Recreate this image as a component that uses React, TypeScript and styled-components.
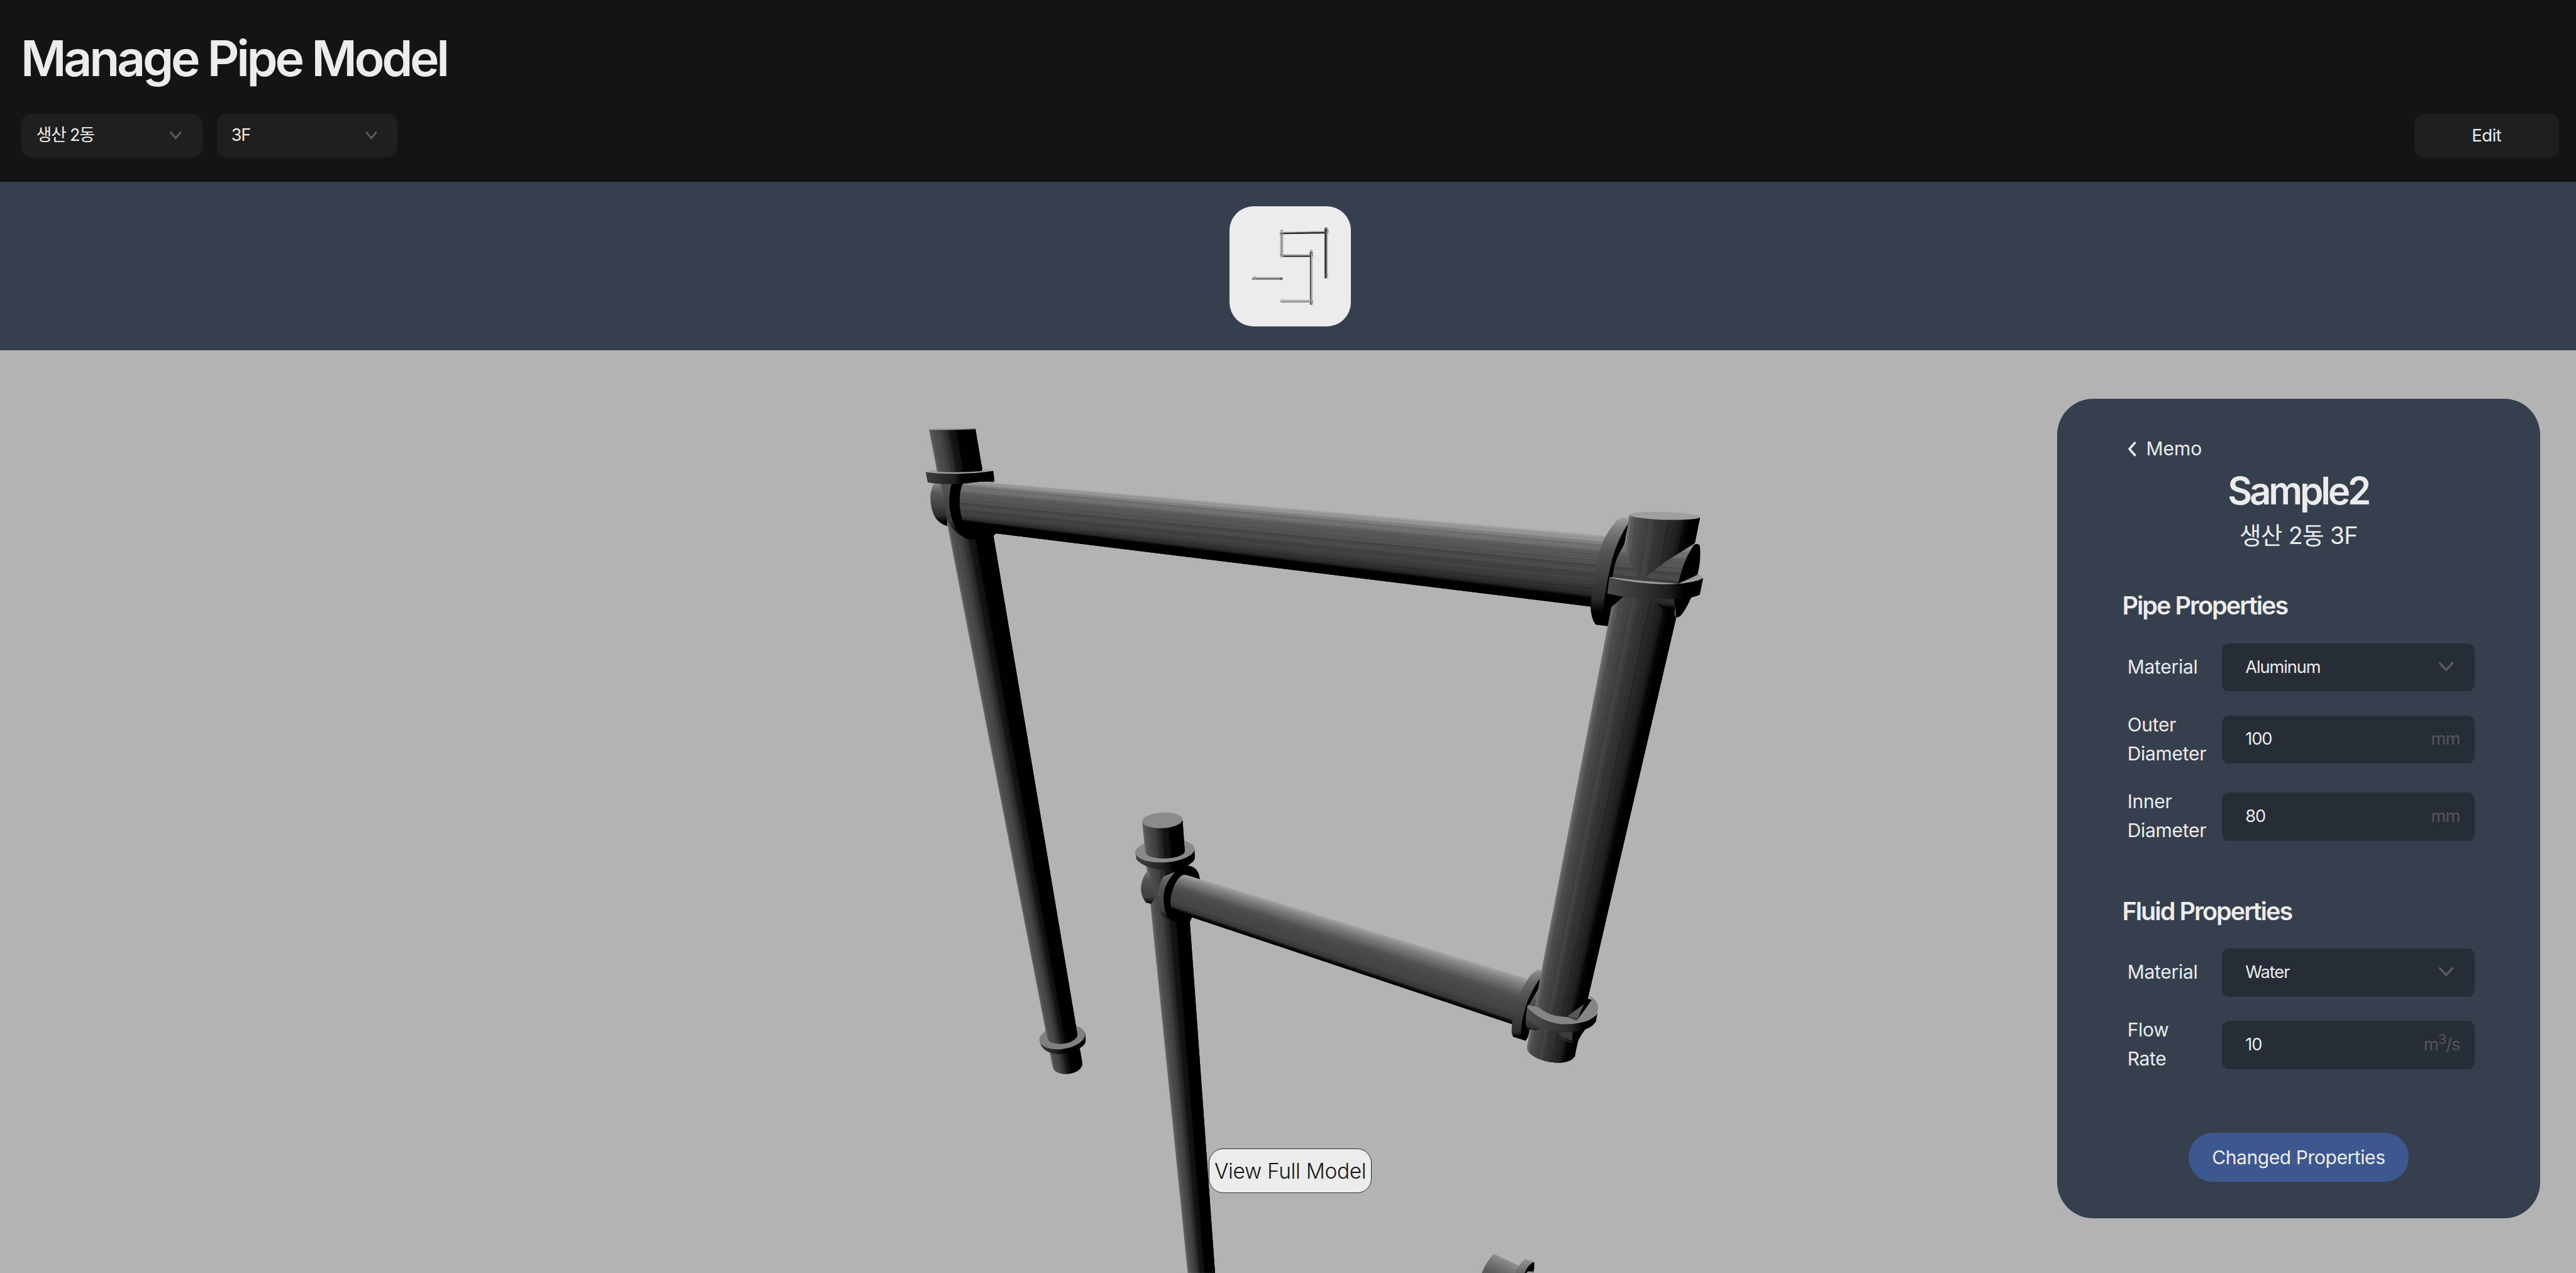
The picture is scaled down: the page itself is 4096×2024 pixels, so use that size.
import React from 'react';
import styled, { createGlobalStyle } from 'styled-components';

/* Design units are laid out on a 5702-unit wide artboard. */
const UNIT = 4096 / 5702;
const u = (n: number) => `${+(n * UNIT).toFixed(2)}px`;

const color = {
  page: '#141414',
  control: '#1f1f1f',
  slate: '#363f4d',
  field: '#272d36',
  stage: '#b3b3b3',
  light: '#ececec',
  muted: '#5c5c5c',
  accent: '#3d588f',
};

const GlobalStyle = createGlobalStyle`
  *, *::before, *::after { box-sizing: border-box; }
  body {
    margin: 0;
    overflow: hidden;
    background: ${color.page};
    color: ${color.light};
    font-family: Inter, "Noto Sans CJK KR", sans-serif;
  }
  h1, h2, h3, p { margin: 0; }
`;

const Page = styled.main`
  display: flex;
  flex-direction: column;
  width: 4096px;
  height: 2024px;
  overflow: hidden;
`;

/* ---------- header ---------- */

const Header = styled.header`
  display: flex;
  flex-direction: column;
  flex: none;
  height: ${u(402)};
  padding: ${u(50)} ${u(38)} 0 ${u(48)};
  background: ${color.page};
`;

const Title = styled.h1`
  height: ${u(160)};
  margin-left: ${u(-2)};
  font-size: ${u(109.5)};
  font-weight: 600;
  letter-spacing: -0.0541em;
  line-height: ${u(160)};
  white-space: nowrap;
`;

const Toolbar = styled.div`
  display: flex;
  justify-content: space-between;
  margin-top: ${u(42)};
`;

const Filters = styled.div`
  display: flex;
  gap: ${u(32)};
`;

const FilterSelect = styled.div`
  display: flex;
  align-items: center;
  justify-content: space-between;
  width: ${u(400)};
  height: ${u(96)};
  padding: 0 ${u(45.5)} 0 ${u(32)};
  border-radius: ${u(21)};
  background: ${color.control};
  font-size: ${u(37.6)};
  letter-spacing: -0.045em;
  line-height: ${u(48)};
  white-space: nowrap;
`;

const EditButton = styled.button`
  width: ${u(320)};
  height: ${u(96)};
  padding: 0 0 ${u(2)};
  border: 0;
  border-radius: ${u(21)};
  background: ${color.control};
  color: ${color.light};
  font: inherit;
  font-size: ${u(38.4)};
  letter-spacing: -0.02em;
`;

/* ---------- model strip ---------- */

const ModelStrip = styled.section`
  display: flex;
  flex: none;
  align-items: center;
  justify-content: center;
  height: ${u(374)};
  padding-left: ${u(10)};
  background: ${color.slate};
`;

const Thumbnail = styled.div`
  width: ${u(268)};
  height: ${u(266)};
  overflow: hidden;
  border-radius: ${u(53)};
  background: ${color.light};

  svg {
    display: block;
    width: 100%;
    height: 100%;
  }
`;

/* ---------- stage ---------- */

const Stage = styled.section`
  position: relative;
  flex: 1;
  overflow: hidden;
  background: ${color.stage};
`;

const Scene = styled.svg`
  display: block;
  width: 4096px;
  height: ${u(2042)};
`;

const ViewButton = styled.button`
  position: absolute;
  top: ${u(1766.5)};
  left: ${u(2676)};
  width: ${u(360)};
  height: ${u(98)};
  padding: ${u(2)} 0 0;
  border: ${u(2.7)} solid #2b2b2b;
  border-radius: ${u(32)};
  background: ${color.light};
  color: #141414;
  font: inherit;
  font-size: ${u(46.5)};
  font-weight: 300;
  letter-spacing: -0.009em;
  white-space: nowrap;
`;

/* ---------- properties panel ---------- */

const Panel = styled.aside`
  position: absolute;
  top: ${u(106)};
  left: ${u(4554)};
  display: flex;
  flex-direction: column;
  width: ${u(1068)};
  height: ${u(1814)};
  padding: ${u(80)} ${u(144)} 0 ${u(142)};
  border-radius: ${u(80)};
  background: ${color.slate};
`;

const BackLink = styled.div`
  display: flex;
  align-items: center;
  gap: ${u(22.5)};
  height: ${u(64)};
  padding-left: ${u(13)};
  font-size: ${u(41.7)};
  line-height: ${u(64)};
`;

const SampleName = styled.h2`
  height: ${u(120)};
  font-size: ${u(83.4)};
  font-weight: 600;
  letter-spacing: -0.0695em;
  line-height: ${u(120)};
  text-align: center;
`;

const Location = styled.p`
  height: ${u(78)};
  padding-left: ${u(2)};
  font-size: ${u(52.4)};
  letter-spacing: -0.018em;
  line-height: ${u(79.5)};
  text-align: center;
`;

const Section = styled.section<{ $top: number }>`
  margin-top: ${(p) => u(p.$top)};
`;

const SectionTitle = styled.h3`
  height: ${u(64)};
  margin-bottom: ${u(51)};
  padding-left: ${u(1.5)};
  font-size: ${u(55)};
  font-weight: 600;
  letter-spacing: -0.049em;
  line-height: ${u(66)};
`;

const Rows = styled.div`
  display: flex;
  flex-direction: column;
  gap: ${u(42.7)};
`;

const PropertyRow = styled.label`
  display: flex;
  align-items: center;
  justify-content: space-between;
`;

const Caption = styled.span`
  width: ${u(184)};
  margin-left: ${u(13)};
  font-size: ${u(41.7)};
  letter-spacing: -0.008em;
  line-height: ${u(64)};
`;

const Field = styled.span<{ $select?: boolean }>`
  display: flex;
  align-items: center;
  justify-content: space-between;
  width: ${u(560.4)};
  height: ${u(106.6)};
  padding: 0 ${(p) => u(p.$select ? 48 : 33)} ${u(2.5)} ${u(52.5)};
  border-radius: ${u(16)};
  background: ${color.field};
  font-size: ${u(37.8)};
  letter-spacing: -0.038em;
`;

const Unit = styled.span`
  color: #53565a;
  font-size: ${u(38)};

  sup {
    font-size: 0.8em;
    line-height: 0;
  }
`;

const SubmitButton = styled.button`
  align-self: center;
  width: ${u(487.5)};
  height: ${u(108.4)};
  margin: ${u(131)} 0 0 ${u(2)};
  padding: 0 0 ${u(1)};
  border: 0;
  border-radius: ${u(54)};
  background: ${color.accent};
  color: ${color.light};
  font: inherit;
  font-size: ${u(41.7)};
  letter-spacing: -0.013em;
  white-space: nowrap;
`;

const ChevronIcon = styled.svg`
  display: block;
  flex: none;
  overflow: visible;
`;

function ChevronDown({ width, height, stroke }: { width: number; height: number; stroke: number }) {
  return (
    <ChevronIcon width={width * UNIT} height={height * UNIT} viewBox={`0 0 ${width} ${height}`}>
      <path
        d={`M2 2 L${width / 2} ${height - 3} L${width - 2} 2`}
        fill="none"
        stroke={color.muted}
        strokeWidth={stroke}
        strokeLinecap="round"
      />
    </ChevronIcon>
  );
}

function ChevronLeft() {
  return (
    <ChevronIcon width={19 * UNIT} height={33 * UNIT} viewBox="0 0 19 33">
      <path d="M16 3 L4 16.5 L16 30" fill="none" stroke={color.light} strokeWidth={5} strokeLinecap="round" strokeLinejoin="round" />
    </ChevronIcon>
  );
}

/* ---------- pipe shading ---------- */

type Point = [number, number];
/* [position at start edge, position at end edge, grey level] */
type Shade = [number, number, number];

interface PipeProps {
  a: [Point, Point];
  b: [Point, Point];
  shades: Shade[];
  noise?: number;
  seed?: number;
  bowStart?: number;
  bowEnd?: number;
  from?: number;
  to?: number;
  clipPath?: string;
}

const mix = (p: Point, q: Point, t: number): Point => [p[0] + (q[0] - p[0]) * t, p[1] + (q[1] - p[1]) * t];

const STRIPS = 56;

/* A tapered cylinder drawn as lengthwise facets; a and b are its two silhouette edges. */
function Pipe({ a, b, shades, noise = 6, seed = 1, bowStart = 0, bowEnd = 0, from = 0, to = 1, clipPath }: PipeProps) {
  const a0 = mix(a[0], a[1], from);
  const a1 = mix(a[0], a[1], to);
  const b0 = mix(b[0], b[1], from);
  const b1 = mix(b[0], b[1], to);
  const m0 = mix(a0, b0, 0.5);
  const m1 = mix(a1, b1, 0.5);
  const len = Math.hypot(m1[0] - m0[0], m1[1] - m0[1]);
  const dir: Point = [(m1[0] - m0[0]) / len, (m1[1] - m0[1]) / len];
  const bend = (t: number) => Math.sqrt(Math.max(0, 1 - (2 * t - 1) ** 2));
  const span = (k: number) => {
    const [f, g] = shades[k];
    return [f + (g - f) * from, f + (g - f) * to];
  };
  const facets: { t0: [number, number]; t1: [number, number]; g: number }[] = [];
  for (let k = 0; k < shades.length - 1; k++) {
    const p = span(k);
    const q = span(k + 1);
    const width = (Math.abs(shades[k + 1][0] - shades[k][0]) + Math.abs(shades[k + 1][1] - shades[k][1])) / 2;
    const n = Math.max(1, Math.round(width * STRIPS));
    for (let i = 0; i < n; i++) {
      const f = i / n;
      const h = (i + 1) / n;
      const base = shades[k][2] + (shades[k + 1][2] - shades[k][2]) * (f + h) * 0.5;
      const wobble = Math.sin(seed * 12.9898 + (k * 17 + i) * 78.233) * 43758.5453;
      const r = wobble - Math.floor(wobble) - 0.5;
      facets.push({
        t0: [p[0] + (q[0] - p[0]) * f, p[1] + (q[1] - p[1]) * f],
        t1: [p[0] + (q[0] - p[0]) * h, p[1] + (q[1] - p[1]) * h],
        g: Math.round(base < 6 ? base : Math.max(0, base + r * noise * 2)),
      });
    }
  }
  const edge = (t: number, end: boolean): string => {
    const p = end ? mix(a1, b1, t) : mix(a0, b0, t);
    const bow = (end ? bowEnd : bowStart) * bend(t);
    return `${(p[0] + dir[0] * bow).toFixed(1)},${(p[1] + dir[1] * bow).toFixed(1)}`;
  };
  return (
    <g clipPath={clipPath}>
      {facets.map((s, i) => {
        const next = facets[Math.min(i + 1, facets.length - 1)];
        return (
          <polygon
            key={i}
            fill={`rgb(${s.g},${s.g},${s.g})`}
            points={[
              edge(s.t0[0], false),
              edge(s.t1[0], false),
              edge(next.t1[0], false),
              edge(next.t1[1], true),
              edge(s.t1[1], true),
              edge(s.t0[1], true),
            ].join(' ')}
          />
        );
      })}
    </g>
  );
}

const Gradient = ({ id, x1, y1, x2, y2, stops }: { id: string; x1: number; y1: number; x2: number; y2: number; stops: [number, string][] }) => (
  <linearGradient id={id} gradientUnits="userSpaceOnUse" x1={x1} y1={y1} x2={x2} y2={y2}>
    {stops.map(([o, c]) => (
      <stop key={o} offset={o} stopColor={c} />
    ))}
  </linearGradient>
);

const leftPost: PipeProps = {
  a: [[2056, 950], [2330, 2362]],
  b: [[2159, 949], [2395.5, 2353]],
  noise: 5,
  shades: [
    [0, 0, 0x62], [0.08, 0.08, 0x50], [0.25, 0.25, 0x42], [0.4, 0.4, 0x28], [0.44, 0.44, 0x14], [0.56, 0.54, 0x12], [0.6, 0.58, 0x02], [1, 1, 0],
  ],
};

const topBeam: PipeProps = {
  a: [[2142, 1064], [3752, 1203.5]],
  b: [[2147, 1174], [3710, 1366.5]],
  noise: 9,
  seed: 3,
  shades: [
    [0, 0, 0xa6], [0.06, 0.07, 0x8c], [0.14, 0.15, 0x70], [0.28, 0.24, 0x5e], [0.4, 0.36, 0x4e], [0.58, 0.5, 0x46],
    [0.7, 0.64, 0x3a], [0.76, 0.74, 0x2e], [0.8, 0.84, 0x22], [0.82, 0.88, 0x02], [1, 1, 0],
  ],
};

const middlePost: PipeProps = {
  a: [[2528.3, 1820], [2629, 2818]],
  b: [[2617.7, 1817], [2689.5, 2818]],
  noise: 4,
  seed: 2,
  shades: [
    [0, 0, 0x68], [0.08, 0.1, 0x50], [0.3, 0.3, 0x3c], [0.45, 0.42, 0x22], [0.5, 0.45, 0x16], [0.64, 0.6, 0x10], [0.67, 0.63, 0], [1, 1, 0],
  ],
};

const middleBeam: PipeProps = {
  a: [[2625, 1937], [3516.7, 2208.3]],
  b: [[2600, 2018], [3480, 2311.7]],
  noise: 3,
  seed: 7,
  shades: [
    [0, 0, 0xa4], [0.08, 0.08, 0x90], [0.22, 0.22, 0x72], [0.36, 0.38, 0x56], [0.5, 0.52, 0x4b], [0.75, 0.75, 0x44],
    [0.88, 0.9, 0x38], [0.94, 0.96, 0x06], [1, 1, 0],
  ],
};

const rightShades: Shade[] = [
  [0, 0, 0x72], [0.06, 0.06, 0x54], [0.2, 0.2, 0x48], [0.4, 0.4, 0x38], [0.6, 0.6, 0x28], [0.76, 0.74, 0x18], [0.84, 0.82, 0x06], [0.88, 0.86, 0], [1, 1, 0],
];

const rightPost: PipeProps = {
  a: [[3582.6, 1262], [3380.2, 2317]],
  b: [[3734.7, 1262], [3485.3, 2337]],
  seed: 5,
  bowEnd: 24,
  shades: rightShades,
};

function PipeModel() {
  return (
    <Scene viewBox="0 776 5702 2042" preserveAspectRatio="none">
      <defs>
        <Gradient id="ringA" x1={207} y1={0} x2={450} y2={0} stops={[[0, '#3e3e3e'], [0.35, '#313131'], [0.8, '#1e1e1e'], [1, '#000']]} />
        <Gradient id="stubA" x1={0} y1={515} x2={0} y2={795} stops={[[0, '#858585'], [0.2, '#5a5a5a'], [0.5, '#444'], [0.75, '#2c2c2c'], [0.9, '#000']]} />
        <Gradient id="collarA" x1={0} y1={515} x2={0} y2={870} stops={[[0, '#555'], [0.4, '#444'], [0.7, '#383838'], [0.88, '#111'], [1, '#000']]} />
        <Gradient id="ringB" x1={473} y1={0} x2={980} y2={0} stops={[[0, '#4c4c4c'], [0.4, '#363636'], [0.8, '#1e1e1e'], [1, '#000']]} />
        <Gradient id="collarB" x1={0} y1={258} x2={0} y2={890} stops={[[0, '#a0a0a0'], [0.12, '#7c7c7c'], [0.35, '#555'], [0.6, '#424242'], [0.85, '#2a2a2a'], [1, '#000']]} />
        <Gradient id="ringC" x1={220} y1={0} x2={460} y2={0} stops={[[0, '#454545'], [0.5, '#2c2c2c'], [0.9, '#141414'], [1, '#000']]} />
        <Gradient id="stubC" x1={0} y1={565} x2={0} y2={783} stops={[[0, '#7a7a7a'], [0.3, '#505050'], [0.8, '#404040'], [1, '#000']]} />
        <Gradient id="collarC" x1={0} y1={572} x2={0} y2={885} stops={[[0, '#7a7a7a'], [0.3, '#555'], [0.8, '#404040'], [1, '#111']]} />
        <Gradient id="ringD" x1={412} y1={0} x2={800} y2={0} stops={[[0, '#4f4f4f'], [0.4, '#3d3d3d'], [0.75, '#2a2a2a'], [1, '#000']]} />
        <Gradient id="collarD" x1={0} y1={203} x2={0} y2={655} stops={[[0, '#909090'], [0.2, '#636363'], [0.5, '#484848'], [0.9, '#303030'], [1, '#000']]} />
        <Gradient id="ringE" x1={242} y1={0} x2={415} y2={0} stops={[[0, '#3a3a3a'], [0.6, '#222'], [1, '#000']]} />
        <Gradient id="patchD" x1={450} y1={515} x2={425} y2={605} stops={[[0, '#444'], [0.6, '#3a3a3a'], [0.85, '#222'], [1, '#000']]} />
        <Gradient id="stubF" x1={1060} y1={145} x2={1000} y2={260} stops={[[0, '#8e8e8e'], [0.5, '#707070'], [1, '#5a5a5a']]} />
        <Gradient id="collarF" x1={0} y1={142} x2={0} y2={240} stops={[[0, '#949494'], [1, '#666']]} />
        <clipPath id="upperPost">
          <path d="M600 200 H1100 V430 L1052 430 L860 550 L745 640 Q720 662 700 664 Q672 655 655 620 Q620 545 598 510 L586 430 Z" />
        </clipPath>
        <clipPath id="lowerPost">
          <path
            transform="translate(3400 1060) scale(.33333)"
            d="M-1000 4000 L0 1500 L470 980 L498 855 L580 785 L790 790 L805 835 L870 890 L932 925 L2000 1000 V4000 Z"
          />
        </clipPath>
      </defs>

      {/* left post with its foot ring */}
      <Pipe {...leftPost} from={0.955} bowEnd={20} />
      <g transform="translate(2220 2180) scale(.33333)">
        <path d="M242 360 L250 395 Q275 455 365 460 Q450 462 510 422 Q548 400 550 370 L546 320 Z" fill="url(#ringE)" />
        <ellipse cx="394" cy="348" rx="153" ry="79" transform="rotate(-9 394 348)" fill="#808080" />
      </g>
      <Pipe {...leftPost} from={0.055} to={0.954} bowEnd={18} />

      {/* top left joint */}
      <g transform="translate(1980 900) scale(.33333)">
        <path d="M262 510 Q238 560 238 610 Q240 690 275 745 Q310 785 350 795 L350 740 L305 510 Z" fill="url(#stubA)" />
        <path d="M318 515 Q328 660 352 755 Q380 820 440 858 L500 885 L470 800 L380 640 L385 510 Z" fill="url(#collarA)" />
        <path d="M380 510 Q355 600 368 690 Q385 800 450 862 Q475 880 502 885 L640 880 L656 866 Q664 845 683 842 L660 560 L490 505 Z" fill="#000" />
      </g>
      <Pipe {...topBeam} bowStart={-20} bowEnd={-12} />
      <Pipe {...leftPost} to={0.067} />
      <g transform="translate(1980 900) scale(.33333)">
        <path d="M228 151 Q320 143 430 144 L538 147 L538 151 Q390 158 228 156 Z" fill="#a3a3a3" />
        <path d="M207 436 L220 505 Q290 518 380 516 Q460 515 530 505 Q590 496 655 503 L664 495 L656 428 Z" fill="url(#ringA)" />
        <path d="M207 437 Q235 425 281 424 L284 434 Q420 442 580 430 L580 420 Q640 414 656 428 Q600 440 450 447 Q300 450 207 437 Z" fill="#a0a0a0" />
      </g>

      {/* top right joint */}
      <g transform="translate(3400 1060) scale(.33333)">
        <path d="M1048 440 Q1075 425 1088 445 Q1098 540 1072 640 L1060 720 L1030 790 Q990 880 960 910 Q945 924 928 922 L918 800 Q928 740 946 690 Q980 540 1048 440 Z" fill="#000" />
        <path d="M615 262 L575 258 Q540 262 500 325 Q440 400 410 530 Q375 680 362 850 Q365 930 395 968 L440 950 L470 750 L550 460 L612 310 Z" fill="url(#collarB)" />
        <path d="M612 298 Q550 390 510 520 Q465 690 447 860 L440 880 L380 920 Q384 950 397 970 L480 980 L502 850 L580 786 L480 765 L492 655 L508 655 Q520 560 545 510 L588 430 Z" fill="#000" />
        <Pipe a={[[618, 243], [560, 700]]} b={[[1089, 258], [1000, 700]]} clipPath="url(#upperPost)" shades={rightShades} seed={5} />
      </g>
      <Pipe {...rightPost} clipPath="url(#lowerPost)" />
      <g transform="translate(3400 1060) scale(.33333)">
        <ellipse cx="854" cy="247" rx="236" ry="26" transform="rotate(1.8 854 247)" fill="#9f9f9f" />
        <path d="M487 658 Q650 695 850 702 Q1040 700 1110 660 L1104 690 L1088 770 Q1060 785 1025 790 L925 800 L800 800 Q600 790 473 762 Z" fill="url(#ringB)" />
        <path d="M487 658 Q500 652 520 657 Q700 682 944 697 Q1020 665 1072 638 Q1102 640 1110 660 Q1040 700 850 702 Q650 695 487 658 Z" fill="#9a9a9a" />
      </g>

      {/* middle post with its upper ring */}
      <Pipe {...middlePost} from={0.07} />
      <g transform="translate(2440 1740) scale(.33333)">
        <path d="M219 436 L226 490 Q290 552 400 558 Q500 555 570 528 L600 505 Q617 490 615 470 L612 420 Z" fill="url(#ringC)" />
        <ellipse cx="416" cy="430" rx="197" ry="78" transform="rotate(-4 416 430)" fill="#8a8a8a" />
      </g>
      <Pipe {...middlePost} to={0.067} bowEnd={15} />
      <g transform="translate(2440 1740) scale(.33333)">
        <ellipse cx="399" cy="229" rx="134" ry="52" transform="rotate(-3 399 229)" fill="#8b8b8b" />
        <path d="M300 565 Q262 610 256 680 Q258 740 290 775 L322 783 L348 750 Q362 720 345 690 Q320 630 305 570 Z" fill="url(#stubC)" />
        <path d="M480 572 L405 602 Q365 680 365 740 Q368 830 405 870 L440 885 L450 700 Z" fill="url(#collarC)" />
        <path d="M490 565 Q408 650 407 740 Q407 830 437 878 Q465 900 495 903 L583 903 L600 860 L648 620 Q640 540 575 530 Q545 525 490 545 Z" fill="#000" />
      </g>

      <Pipe {...middleBeam} bowStart={-18} bowEnd={-14} />

      {/* lower right joint */}
      <g transform="translate(3240 2080) scale(.33333)">
        <path d="M515 205 L490 203 Q440 225 405 300 Q355 400 340 450 Q315 560 318 620 L328 645 L378 650 L420 420 L508 258 Z" fill="url(#collarD)" />
        <path d="M505 258 Q430 370 405 470 Q380 560 378 640 L326 632 L328 646 L412 672 Q430 650 437 605 L412 590 L412 520 L420 450 Q450 410 500 320 Z" fill="#000" />
      </g>
      <Pipe {...rightPost} from={0.72} />
      <g transform="translate(3240 2080) scale(.33333)">
        <path d="M412 515 L520 590 Q490 602 470 605 L415 585 Z" fill="url(#patchD)" />
        <path d="M625 615 L725 612 L720 688 Q680 680 650 655 Z" fill="#3a3a3a" />
        <path d="M640 645 L720 688 L716 670 Z" fill="#111" />
        <path d="M725 605 L808 596 Q780 630 755 682 L738 780 L700 780 L720 690 Z" fill="#000" />
        <path d="M422 450 Q500 540 640 562 Q740 568 820 540 Q875 515 888 488 L878 545 Q850 585 800 600 L725 615 Q600 615 520 590 Q450 560 412 515 Z" fill="url(#ringD)" />
        <path d="M425 435 L500 450 Q560 505 650 512 L690 515 L748 537 L850 405 L830 372 Q885 395 893 450 Q892 505 820 540 Q740 568 640 562 Q500 540 422 450 Z" fill="#858585" />
        <path d="M690 508 L800 428 L752 537 Z" fill="#585858" />
        <path d="M690 514 L752 520 L750 537 Z" fill="#404040" />
        <path d="M800 430 L825 392 L850 402 L752 537 Z" fill="#000" />
      </g>

      {/* elbow entering from below */}
      <g transform="translate(2980 2740) scale(.33333)">
        <path d="M980 108 L1150 188 L1125 240 L898 240 Q925 165 980 108 Z" fill="url(#stubF)" />
        <path d="M1190 142 L1245 162 L1200 240 L1122 240 Q1150 165 1190 142 Z" fill="url(#collarF)" />
        <path d="M1245 162 L1248 165 V205 L1240 240 H1183 Q1205 180 1245 162 Z" fill="#000" />
        <path d="M1203 224 H1240 V240 H1195 Z" fill="#9a9a9a" />
      </g>
    </Scene>
  );
}

/* ---------- thumbnail drawing ---------- */

/* x, y, width, height, grey */
const thumbBars: [number, number, number, number, string][] = [
  [522, 345, 7, 155, '#b0b0b0'], [528, 345, 9, 155, '#949494'], [536, 345, 8, 155, '#b8b8b8'],
  [540, 486, 186, 8, '#c0c0c0'], [540, 491, 186, 6, '#8a8a8a'], [540, 497, 186, 7, '#1a1a1a'],
  [720, 470, 6, 350, '#383838'], [726, 470, 5, 350, '#666'], [730, 470, 8, 350, '#b0b0b0'],
  [816, 312, 5, 334, '#777'], [820, 312, 8, 334, '#181818'], [828, 312, 6, 334, '#666'], [833, 312, 6, 334, '#b4b4b4'],
  [336, 637, 204, 7, '#c6c6c6'], [336, 643, 204, 6, '#989898'], [336, 648, 204, 6, '#4a4a4a'],
  [524, 787, 200, 7, '#c8c8c8'], [524, 794, 200, 9, '#a2a2a2'], [524, 802, 200, 5, '#8c8c8c'],
];

const thumbJoints: [number, number, number, number, string][] = [
  [524, 325, 16, 12, '#777'], [518, 341, 28, 7, '#555'], [522, 348, 24, 8, '#777'],
  [518, 486, 20, 6, '#777'], [524, 494, 20, 14, '#999'],
  [822, 307, 14, 12, '#777'], [816, 324, 29, 7, '#444'], [830, 332, 14, 15, '#888'],
  [721, 458, 16, 10, '#777'], [715, 473, 27, 7, '#444'], [728, 486, 15, 16, '#888'],
  [816, 624, 28, 6, '#777'],
  [349, 630, 12, 28, '#a0a0a0'], [522, 640, 9, 19, '#444'],
  [536, 783, 10, 30, '#b0b0b0'], [728, 792, 14, 18, '#888'], [723, 810, 14, 14, '#777'],
];

function ModelThumbnail() {
  return (
    <svg viewBox="186 168 804 798" preserveAspectRatio="none">
      <polygon points="540,338 825,331 825,337 540,343" fill="#bcbcbc" />
      <polygon points="540,341 825,336 825,342 540,347" fill="#777" />
      <polygon points="540,346 825,340 825,349 540,353" fill="#181818" />
      {thumbBars.map(([x, y, w, h, f], i) => (
        <rect key={i} x={x} y={y} width={w} height={h} fill={f} />
      ))}
      {thumbJoints.map(([x, y, w, h, f], i) => (
        <rect key={i} x={x} y={y} width={w} height={h} rx={3} fill={f} fillOpacity={0.75} />
      ))}
    </svg>
  );
}

/* ---------- page ---------- */

interface Property {
  label: React.ReactNode;
  value: string;
  unit?: React.ReactNode;
}

const pipeProperties: Property[] = [
  { label: 'Material', value: 'Aluminum' },
  { label: 'Outer Diameter', value: '100', unit: 'mm' },
  { label: 'Inner Diameter', value: '80', unit: 'mm' },
];

const fluidProperties: Property[] = [
  { label: 'Material', value: 'Water' },
  { label: <>Flow<br />Rate</>, value: '10', unit: <>m<sup>3</sup>/s</> },
];

function PropertyList({ items }: { items: Property[] }) {
  return (
    <Rows>
      {items.map((item, i) => (
        <PropertyRow key={i}>
          <Caption>{item.label}</Caption>
          <Field $select={!item.unit}>
            <span>{item.value}</span>
            {item.unit ? <Unit>{item.unit}</Unit> : <ChevronDown width={32} height={20} stroke={5} />}
          </Field>
        </PropertyRow>
      ))}
    </Rows>
  );
}

export default function App() {
  return (
    <Page>
      <GlobalStyle />
      <Header>
        <Title>Manage Pipe Model</Title>
        <Toolbar>
          <Filters>
            <FilterSelect>
              <span>생산 2동</span>
              <ChevronDown width={26} height={18} stroke={4} />
            </FilterSelect>
            <FilterSelect>
              <span>3F</span>
              <ChevronDown width={26} height={18} stroke={4} />
            </FilterSelect>
          </Filters>
          <EditButton>Edit</EditButton>
        </Toolbar>
      </Header>
      <ModelStrip>
        <Thumbnail>
          <ModelThumbnail />
        </Thumbnail>
      </ModelStrip>
      <Stage>
        <PipeModel />
        <ViewButton>View Full Model</ViewButton>
        <Panel>
          <BackLink>
            <ChevronLeft />
            <span>Memo</span>
          </BackLink>
          <SampleName>Sample2</SampleName>
          <Location>생산 2동 3F</Location>
          <Section $top={84.7}>
            <SectionTitle>Pipe Properties</SectionTitle>
            <PropertyList items={pipeProperties} />
          </Section>
          <Section $top={113}>
            <SectionTitle>Fluid Properties</SectionTitle>
            <PropertyList items={fluidProperties} />
          </Section>
          <SubmitButton>Changed Properties</SubmitButton>
        </Panel>
      </Stage>
    </Page>
  );
}
